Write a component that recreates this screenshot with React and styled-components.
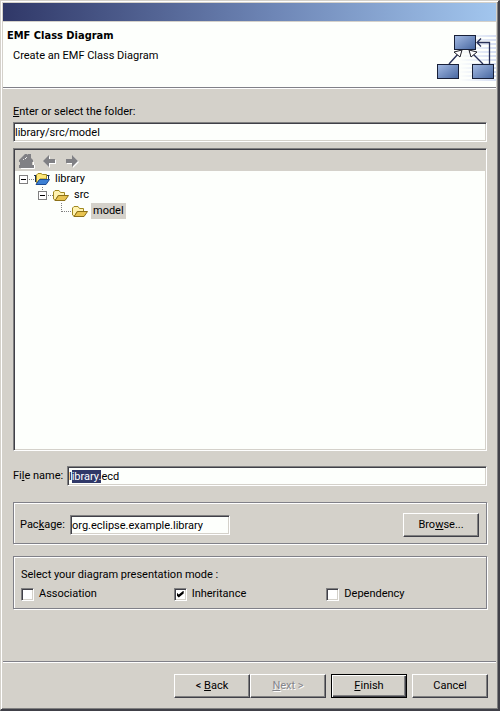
import React, { useEffect, useRef } from "react";
import styled, { createGlobalStyle } from "styled-components";

const FACE = "#d4d1ca";

const GlobalStyle = createGlobalStyle`
  * { box-sizing: border-box; }
  body {
    margin: 0;
    background: ${FACE};
    color: #000;
    font: 11px/14px Roboto, "DejaVu Sans Condensed", sans-serif;
  }
  button, input { font: inherit; color: inherit; }
`;

const Dialog = styled.form`
  display: flex;
  flex-direction: column;
  min-height: 100vh;
  border-style: solid;
  border-width: 1px 2px 2px 1px;
  border-color: ${FACE} #404048 #404048 ${FACE};
  box-shadow: inset 1px 1px #fff, inset -1px -1px #808080;
  padding: 2px;
`;

const TitleBar = styled.div`
  height: 18px;
  background: linear-gradient(90deg, #303868 0%, #6e86b6 55%, #a2c6ee 100%);
`;

const Header = styled.header`
  display: flex;
  justify-content: space-between;
  height: 66px;
  margin-top: 1px;
  padding-left: 4px;
  background: #fdfffc;
  border-bottom: 1px solid #808088;
  box-shadow: 0 1px #fff;
`;

const Heading = styled.h1`
  margin: 7px 0 6px;
  font-family: "DejaVu Sans Condensed", sans-serif;
  font-size: 11px;
  line-height: 14px;
`;

const Subtitle = styled.p`
  margin: 0;
  padding-left: 6px;
`;

const Content = styled.main`
  flex: 1;
  display: flex;
  flex-direction: column;
  padding: 17px 9px 52px 10px;
`;

const TextInput = styled.input`
  width: ${(p) => p.$width || "100%"};
  min-width: 0;
  height: 20px;
  padding: 0 1px;
  background: #fdfffc;
  border: 1px solid;
  border-color: #808080 #fff #fff #808080;
  border-radius: 0;
  box-shadow: inset 1px 1px #404048, inset -1px -1px ${FACE};
  outline: 0;
  &::selection { background: #303868; color: #fff; }
`;

const FolderLabel = styled.label`
  margin-bottom: 3px;
`;

const Tree = styled.section`
  flex: 1;
  min-height: 120px;
  margin: 6px 0 15px;
  padding: 1px;
  background: #fdfffc;
  border: 1px solid;
  border-color: #808080 #fff #fff #808080;
  box-shadow: inset 1px 1px #404048, inset -1px -1px ${FACE};
`;

const TreeTools = styled.div`
  display: flex;
  align-items: center;
  gap: 7px;
  height: 21px;
  padding-left: 4px;
  background: ${FACE};
`;

const ToolButton = styled.button`
  display: flex;
  padding: 0;
  border: 0;
  background: none;
`;

const TreeList = styled.ul`
  margin: 0;
  padding: 0;
  list-style: none;
`;

const TreeRow = styled.li`
  display: flex;
  align-items: center;
  height: 16px;
  padding-left: ${(p) => 4 + p.$level * 19}px;
`;

const NodeName = styled.span`
  line-height: 16px;
  margin-left: 3px;
  padding: 0 2px;
  background: ${(p) => (p.$selected ? FACE : "transparent")};
`;

const Field = styled.div`
  display: flex;
  align-items: center;
  flex: 1;
`;

const FieldLabel = styled.label`
  flex: none;
  width: ${(p) => p.$width}px;
  white-space: nowrap;
`;

const Group = styled.section`
  margin-top: ${(p) => p.$gap}px;
  border: 1px solid #808088;
  box-shadow: 1px 1px #fff, inset 1px 1px #fff;
  padding: ${(p) => p.$pad};
`;

const FileRow = styled.div`
  display: flex;
`;

const PackageRow = styled.div`
  display: flex;
  align-items: center;
  justify-content: space-between;
`;

const ModeLabel = styled.p`
  margin: 0 0 5px;
`;

const Modes = styled.div`
  display: grid;
  grid-template-columns: repeat(3, 1fr);
`;

const Check = styled.label`
  display: flex;
  align-items: center;
  gap: 5px;
`;

const CheckBox = styled.input`
  appearance: none;
  display: grid;
  width: 13px;
  height: 13px;
  margin: 0;
  background: #fff;
  border: 1px solid;
  border-color: #808080 #fff #fff #808080;
  box-shadow: inset 1px 1px #404048, inset -1px -1px ${FACE};
  &:checked::before {
    content: "";
    width: 7px;
    height: 7px;
    margin: 2px;
    background: #000;
    clip-path: polygon(0 28%, 30% 57%, 100% 0, 100% 43%, 30% 100%, 0 71%);
  }
`;

const Button = styled.button`
  width: 76px;
  height: 24px;
  padding: 0 0 1px;
  background: ${FACE};
  border-radius: 0;
  border: 1px solid;
  border-color: #fff #404048 #404048 #fff;
  box-shadow: inset -1px -1px #808080;
  &:disabled { color: #85858a; text-shadow: 1px 1px #fff; }
`;

const DefaultButton = styled(Button)`
  border-color: #000;
  box-shadow: inset 1px 1px #fff, inset -1px -1px #404048, inset -2px -2px #808080;
`;

const Footer = styled.footer`
  display: flex;
  justify-content: flex-end;
  gap: 5px;
  padding: 12px 8px 9px;
  border-top: 1px solid #808088;
  box-shadow: inset 0 1px #fff;
`;

const Pair = styled.div`
  display: flex;
`;

const Box = ({ x, y }) => (
  <rect x={x + 0.5} y={y + 0.5} width="21" height="14" fill="url(#umlFill)" stroke="#182038" />
);

const DiagramArt = () => (
  <svg width="61" height="64" viewBox="0 0 61 64" aria-hidden="true">
    <defs>
      <linearGradient id="umlFill" x1="0" y1="0" x2="1" y2="1">
        <stop offset="0" stopColor="#a6bce4" />
        <stop offset="1" stopColor="#4666a0" />
      </linearGradient>
      <linearGradient id="umlFade">
        <stop offset="0" stopColor="#fdfffc" />
        <stop offset="1" stopColor="#d4ddf3" />
      </linearGradient>
    </defs>
    {[13, 17, 21, 25, 29, 33, 37, 41, 45, 49, 53, 57].map((y) => (
      <rect key={y} x="24" y={y} width="37" height="2" fill="url(#umlFade)" />
    ))}
    <path d="M14 42 23 32M48 42 38 32" stroke="#283058" strokeWidth="1.4" />
    <path d="M19 30 27 28 25 35ZM42 30 34 28 36 35Z" fill="#fff" stroke="#202028" />
    <path d="M54.500 42V20.500H42M46 16.500 42 20.500 46 24.500" fill="none" stroke="#283058" strokeWidth="1.300" />
    <Box x={19} y={13} />
    <Box x={2} y={42} />
    <Box x={37} y={42} />
  </svg>
);

const HomeIcon = () => (
  <svg width="16" height="16" viewBox="0 0 16 16" aria-hidden="true">
    <path d="M2 15.500H15.500V12M14.500 9V12" fill="none" stroke="#fff" />
    <path d="M0 7 6 1H8L9 2V1h3v4l2 2v2h-1v3h2v3H0v-3h1V9H0Z" fill="#808084" />
    <path d="M4 6.500h1M6 5.500h1M8 4 6 6" stroke="#fff" strokeWidth=".8" />
  </svg>
);

const ArrowIcon = ({ forward }) => {
  const d = forward ? "M1 6H7V2L13 8 7 14V10H1Z" : "M13 6H7V2L1 8 7 14V10H13Z";
  return (
    <svg width="16" height="16" viewBox="0 0 16 16" aria-hidden="true">
      <g transform="translate(1 1)"><path d={d} fill="#fff" /></g>
      <path d={d} fill="#808084" />
    </svg>
  );
};

const Expander = () => (
  <svg width="15" height="16" viewBox="0 0 15 16" aria-hidden="true">
    <rect x=".5" y="4.500" width="8" height="8" fill="#fff" stroke="#808080" />
    <path d="M2 8.500H7" stroke="#000" />
    <path d="M10 8.500H15M4.500 0V4" stroke="#808080" strokeDasharray="1 1" />
  </svg>
);

const RootExpander = () => (
  <svg width="15" height="16" viewBox="0 0 15 16" aria-hidden="true">
    <rect x=".5" y="4.500" width="8" height="8" fill="#fff" stroke="#808080" />
    <path d="M2 8.500H7" stroke="#000" />
    <path d="M10 8.500H15" stroke="#808080" strokeDasharray="1 1" />
  </svg>
);

const Branch = () => (
  <svg width="15" height="16" viewBox="0 0 15 16" aria-hidden="true">
    <path d="M4.500 0V9M5 8.500H15" fill="none" stroke="#808080" strokeDasharray="1 1" />
  </svg>
);

const FolderIcon = () => (
  <svg width="16" height="16" viewBox="0 0 16 16" aria-hidden="true">
    <path d="M.5 12V5L2 3.500H6L7.500 5.500H11.500V8.500H5L2.500 13.500Z" fill="#fff3b0" stroke="#a08820" />
    <path d="M2 13.500 5.500 8.500H15.500L12 13.500Z" fill="#e8c450" stroke="#8c7018" />
  </svg>
);

const ProjectIcon = () => (
  <svg width="16" height="16" viewBox="0 0 16 16" aria-hidden="true">
    <path d="M0 4.500H3M12 4.500H15.500M14.500 5V8M1.500 5V11" fill="none" stroke="#183050" />
    <path d="M2.500 11V4L4 2.500H7L8.500 3.500H12.500V8H6L3 12Z" fill="#ffe878" stroke="#a08820" />
    <path d="M2 13.500 5.500 8.500H15.500L12 13.500Z" fill="#3c80d4" stroke="#1c4c94" />
  </svg>
);

export default function App() {
  const fileRef = useRef(null);

  useEffect(() => {
    fileRef.current.focus();
    fileRef.current.setSelectionRange(1, 8);
  }, []);

  return (
    <>
      <GlobalStyle />
      <Dialog onSubmit={(e) => e.preventDefault()}>
        <TitleBar />
        <Header>
          <div>
            <Heading>EMF Class Diagram</Heading>
            <Subtitle>Create an EMF Class Diagram</Subtitle>
          </div>
          <DiagramArt />
        </Header>
        <Content>
          <FolderLabel htmlFor="folder"><u>E</u>nter or select the folder:</FolderLabel>
          <TextInput id="folder" defaultValue="library/src/model" />
          <Tree>
            <TreeTools>
              <ToolButton type="button" disabled aria-label="Home"><HomeIcon /></ToolButton>
              <ToolButton type="button" disabled aria-label="Back"><ArrowIcon /></ToolButton>
              <ToolButton type="button" disabled aria-label="Forward"><ArrowIcon forward /></ToolButton>
            </TreeTools>
            <TreeList>
              <TreeRow $level={0}><RootExpander /><ProjectIcon /><NodeName>library</NodeName></TreeRow>
              <TreeRow $level={1}><Expander /><FolderIcon /><NodeName>src</NodeName></TreeRow>
              <TreeRow $level={2}><Branch /><FolderIcon /><NodeName $selected>model</NodeName></TreeRow>
            </TreeList>
          </Tree>
          <FileRow>
            <Field>
              <FieldLabel htmlFor="file" $width={54}>Fi<u>l</u>e name:</FieldLabel>
              <TextInput id="file" ref={fileRef} defaultValue="library.ecd" />
            </Field>
          </FileRow>
          <Group $gap={16} $pad="10px 7px 6px 6px">
            <PackageRow>
              <Field>
                <FieldLabel htmlFor="package" $width={50}>Pac<u>k</u>age:</FieldLabel>
                <TextInput id="package" $width="160px" defaultValue="org.eclipse.example.library" />
              </Field>
              <Button type="button">Bro<u>w</u>se...</Button>
            </PackageRow>
          </Group>
          <Group $gap={12} $pad="11px 7px 7px 7px">
            <ModeLabel>Select your diagram presentation mode :</ModeLabel>
            <Modes>
              <Check><CheckBox type="checkbox" />Association</Check>
              <Check><CheckBox type="checkbox" defaultChecked />Inheritance</Check>
              <Check><CheckBox type="checkbox" />Dependency</Check>
            </Modes>
          </Group>
        </Content>
        <Footer>
          <Pair>
            <Button type="button">&lt; <u>B</u>ack</Button>
            <Button type="button" disabled><u>N</u>ext &gt;</Button>
          </Pair>
          <DefaultButton type="submit"><u>F</u>inish</DefaultButton>
          <Button type="button">Cancel</Button>
        </Footer>
      </Dialog>
    </>
  );
}
